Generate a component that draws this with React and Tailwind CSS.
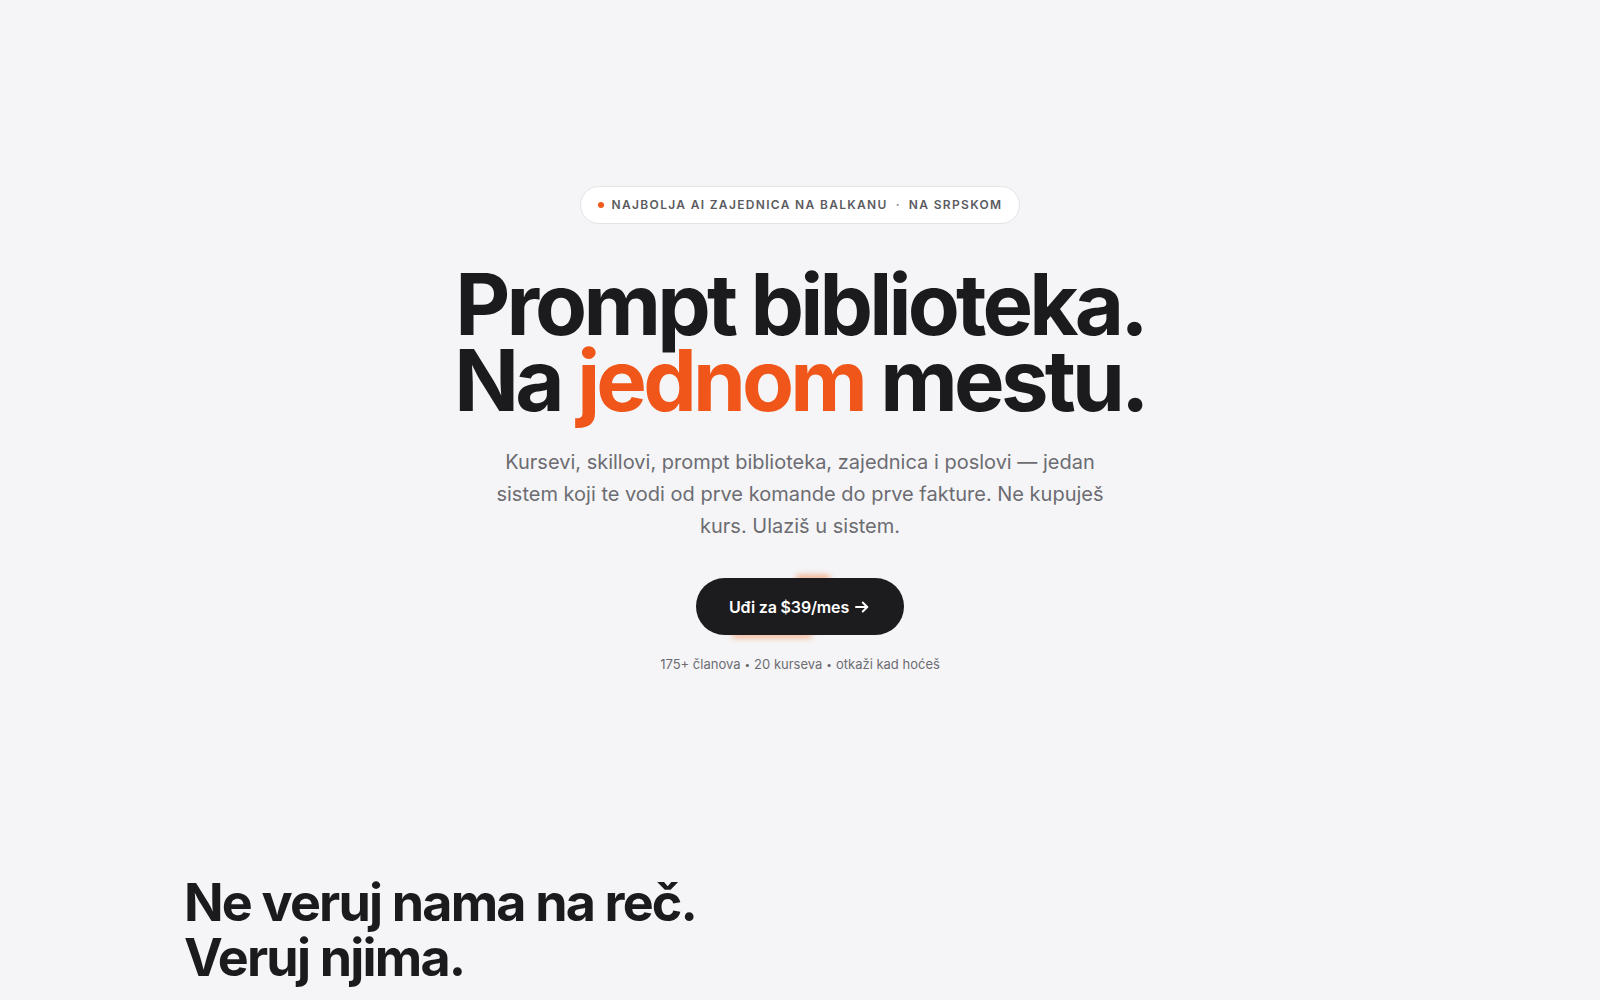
import React from "react";

const stats = ["175+ članova", "20 kurseva", "otkaži kad hoćeš"];

const App = () => {
  return (
    <div
      className="min-h-screen bg-[#f5f5f7] text-[#1b1b1d]"
      style={{ fontFamily: "Inter, 'Noto Sans', sans-serif" }}
    >
      {/* Hero */}
      <section className="flex flex-col items-center pt-[186px] text-center">
        <div className="flex h-[38px] items-center gap-2 rounded-full border border-[#e4e4e7] bg-white px-[17px] text-[12px] font-semibold tracking-[0.11em] text-[#5b5b60]">
          <span className="h-[6px] w-[6px] rounded-full bg-[#f05a1a]" />
          <span>NAJBOLJA AI ZAJEDNICA NA BALKANU</span>
          <span className="text-[#8a8a8f]">·</span>
          <span>NA SRPSKOM</span>
        </div>

        <h1 className="mt-[43px] text-[85px] font-bold leading-[76px] tracking-[-0.045em]">
          Prompt biblioteka.
          <br />
          Na <span className="text-[#f0561a]">jednom</span> mestu.
        </h1>

        <p className="mt-[27px] max-w-[620px] text-[20px] leading-[32px] text-[#6c6c72]">
          Kursevi, skillovi, prompt biblioteka, zajednica i poslovi — jedan sistem koji te vodi od
          prve komande do prve fakture. Ne kupuješ kurs. Ulaziš u sistem.
        </p>

        <div className="relative mt-[36px]">
          <span className="absolute left-[100px] top-[-2px] h-[4px] w-[34px] rounded-full bg-[#f26b1d] opacity-80 blur-[3px]" />
          <span className="absolute bottom-[-2px] left-[36px] h-[4px] w-[80px] rounded-full bg-[#f26b1d] opacity-70 blur-[3px]" />
          <button className="relative flex h-[57px] w-[208px] items-center justify-center gap-1 rounded-full bg-[#1c1c1e] text-[16px] font-semibold tracking-[-0.01em] text-white">
            Uđi za $39/mes
            <svg width="18" height="18" viewBox="0 0 24 24" fill="none" stroke="currentColor" strokeWidth="2.6" strokeLinecap="round" strokeLinejoin="round">
              <path d="M4 12h15" />
              <path d="M13 6l6 6-6 6" />
            </svg>
          </button>
        </div>

        <div className="mt-[19px] flex items-center gap-1 text-[13px] leading-[20px] text-[#6c6c72]">
          {stats.map((s, i) => (
            <React.Fragment key={s}>
              {i > 0 && <span className="text-[10px]">•</span>}
              <span>{s}</span>
            </React.Fragment>
          ))}
        </div>
      </section>

      {/* Testimonials intro */}
      <section className="mx-auto mt-[201px] max-w-[1280px] px-6">
        <h2 className="text-[52px] font-bold leading-[55px] tracking-[-0.035em]">
          Ne veruj nama na reč.
          <br />
          Veruj njima.
        </h2>
      </section>
    </div>
  );
};

export default App;
